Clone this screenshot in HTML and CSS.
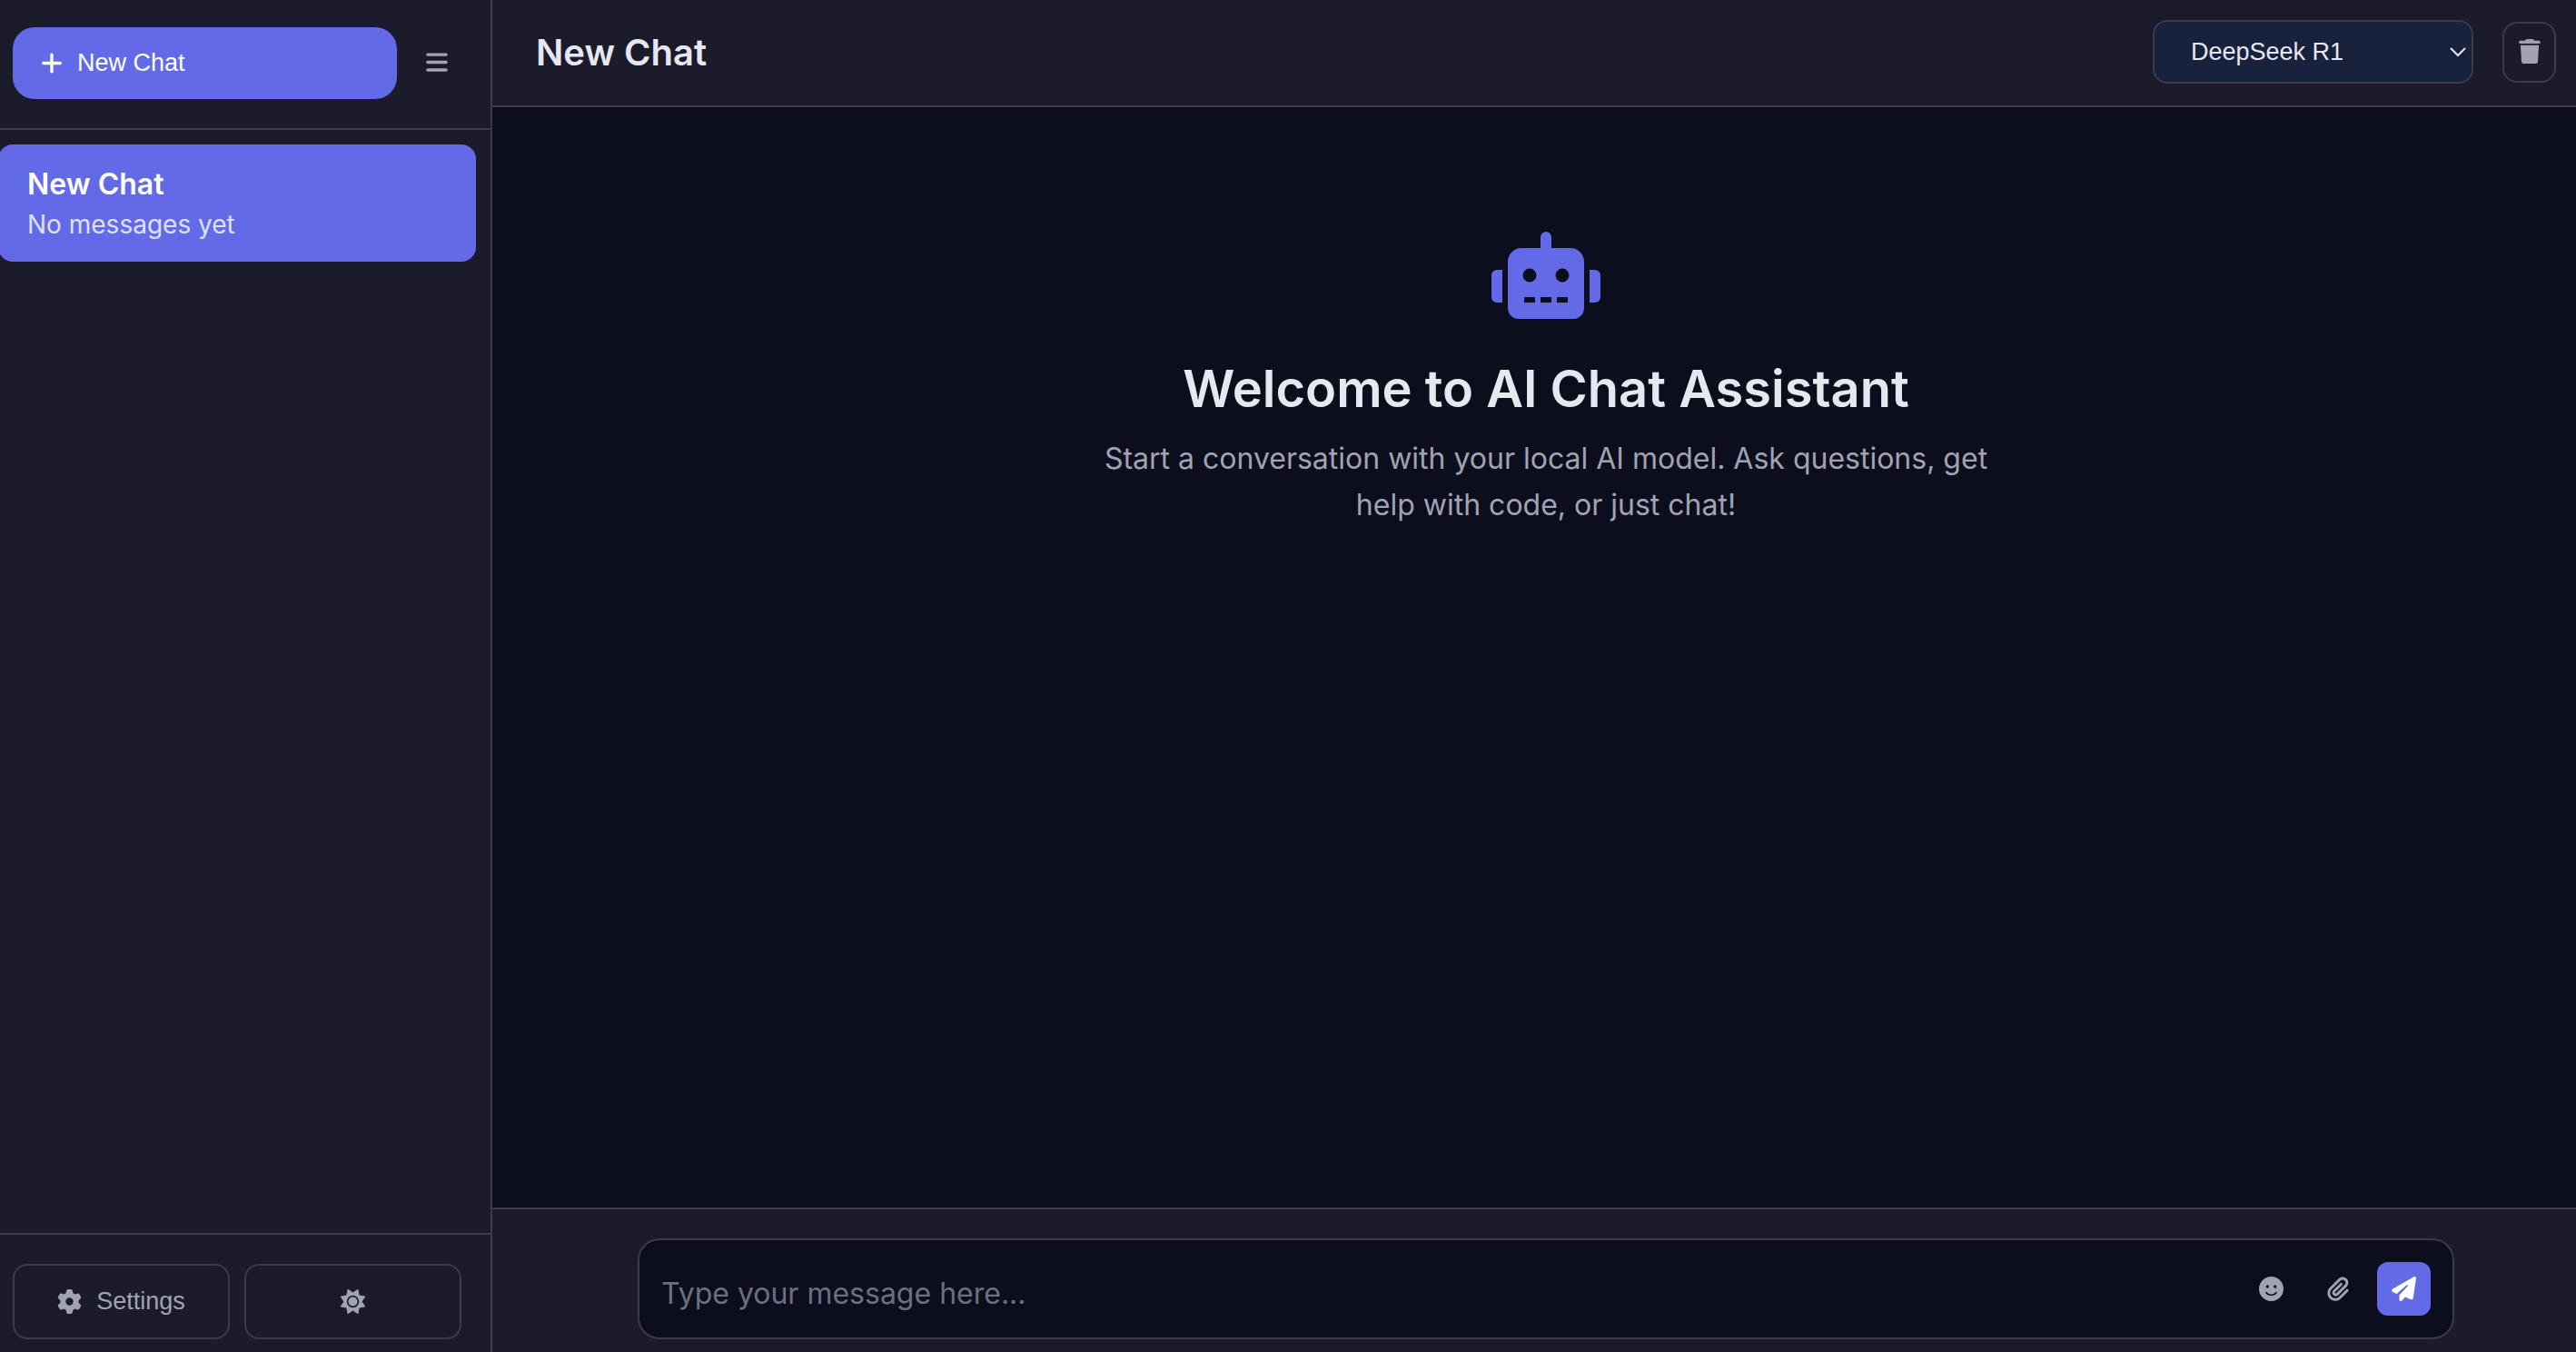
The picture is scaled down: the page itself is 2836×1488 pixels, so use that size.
FILE: index.html
```html
<!DOCTYPE html>
<html lang="en">
<head>
<meta charset="utf-8">
<title>AI Chat Assistant</title>
<link rel="stylesheet" href="styles.css">
</head>
<body>
<div class="app">
  <aside class="sidebar">
    <div class="sidebar-header">
      <button class="new-chat" type="button">
        <svg class="icon icon-narrow" viewBox="0 0 448 512" aria-hidden="true"><path d="M256 80c0-17.7-14.3-32-32-32s-32 14.3-32 32V224H48c-17.7 0-32 14.3-32 32s14.3 32 32 32H192V432c0 17.7 14.3 32 32 32s32-14.3 32-32V288H400c17.7 0 32-14.3 32-32s-14.3-32-32-32H256V80z"/></svg>
        <span>New Chat</span>
      </button>
      <button class="sidebar-toggle" type="button" aria-label="Toggle sidebar">
        <svg class="icon icon-narrow" viewBox="0 0 448 512" aria-hidden="true"><path d="M0 96C0 78.3 14.3 64 32 64H416c17.7 0 32 14.3 32 32s-14.3 32-32 32H32C14.3 128 0 113.7 0 96zM0 256c0-17.7 14.3-32 32-32H416c17.7 0 32 14.3 32 32s-14.3 32-32 32H32c-17.7 0-32-14.3-32-32zM448 416c0 17.7-14.3 32-32 32H32c-17.7 0-32-14.3-32-32s14.3-32 32-32H416c17.7 0 32 14.3 32 32z"/></svg>
      </button>
    </div>
    <nav class="chat-list" aria-label="Chats">
      <a class="chat-item" href="#chat">
        <span class="chat-title">New Chat</span>
        <span class="chat-preview">No messages yet</span>
      </a>
    </nav>
    <div class="sidebar-footer">
      <button class="footer-button" type="button">
        <svg class="icon" viewBox="0 0 512 512" aria-hidden="true"><path d="M495.9 166.6c3.2 8.7 .5 18.4-6.4 24.6l-43.3 39.4c1.1 8.3 1.7 16.8 1.7 25.4s-.6 17.1-1.7 25.4l43.3 39.4c6.9 6.2 9.6 15.9 6.4 24.6c-4.4 11.9-9.7 23.3-15.8 34.3l-4.7 8.1c-6.6 11-14 21.4-22.1 31.2c-5.9 7.2-15.7 9.6-24.5 6.8l-55.7-17.7c-13.4 10.3-28.2 18.9-44 25.4l-12.5 57.1c-2 9.1-9 16.3-18.2 17.8c-13.8 2.3-28 3.5-42.5 3.5s-28.7-1.2-42.5-3.5c-9.2-1.5-16.2-8.7-18.2-17.8l-12.5-57.1c-15.8-6.5-30.6-15.1-44-25.4L83.1 425.9c-8.8 2.8-18.6 .3-24.5-6.8c-8.1-9.8-15.5-20.2-22.1-31.2l-4.7-8.1c-6.1-11-11.4-22.4-15.8-34.3c-3.2-8.7-.5-18.4 6.4-24.6l43.3-39.4C64.6 273.1 64 264.6 64 256s.6-17.1 1.7-25.4L22.4 191.2c-6.9-6.2-9.6-15.9-6.4-24.6c4.4-11.9 9.7-23.3 15.8-34.3l4.7-8.1c6.6-11 14-21.4 22.1-31.2c5.9-7.2 15.7-9.6 24.5-6.8l55.7 17.7c13.4-10.3 28.2-18.9 44-25.4l12.5-57.1c2-9.1 9-16.3 18.2-17.8C227.3 1.2 241.5 0 256 0s28.7 1.2 42.5 3.5c9.2 1.5 16.2 8.7 18.2 17.8l12.5 57.1c15.8 6.5 30.6 15.1 44 25.4l55.7-17.7c8.8-2.8 18.6-.3 24.5 6.8c8.1 9.8 15.5 20.2 22.1 31.2l4.7 8.1c6.1 11 11.4 22.4 15.8 34.3zM256 336a80 80 0 1 0 0-160 80 80 0 1 0 0 160z"/></svg>
        <span>Settings</span>
      </button>
      <button class="footer-button" type="button" aria-label="Switch theme">
        <svg class="icon" viewBox="0 0 512 512" aria-hidden="true"><path d="M361.5 1.2c5 2.1 8.6 6.6 9.6 11.9L391 121l107.9 19.8c5.3 1 9.8 4.6 11.9 9.6s1.5 10.7-1.6 15.2L446.9 256l62.3 90.3c3.1 4.5 3.7 10.2 1.6 15.2s-6.6 8.6-11.9 9.6L391 391 371.1 498.9c-1 5.3-4.6 9.8-9.6 11.9s-10.7 1.5-15.2-1.6L256 446.9l-90.3 62.3c-4.5 3.1-10.2 3.7-15.2 1.6s-8.6-6.6-9.6-11.9L121 391 13.1 371.1c-5.3-1-9.8-4.6-11.9-9.6s-1.5-10.7 1.6-15.2L65.1 256 2.8 165.7c-3.1-4.5-3.7-10.2-1.6-15.2s6.6-8.6 11.9-9.6L121 121 140.9 13.1c1-5.3 4.6-9.8 9.6-11.9s10.7-1.5 15.2 1.6L256 65.1 346.3 2.8c4.5-3.1 10.2-3.7 15.2-1.6zM160 256a96 96 0 1 1 192 0 96 96 0 1 1 -192 0zm224 0a128 128 0 1 0 -256 0 128 128 0 1 0 256 0z"/></svg>
      </button>
    </div>
  </aside>

  <main class="main">
    <header class="main-header">
      <h1 class="main-title">New Chat</h1>
      <div class="model-picker">
        <select class="model-select" aria-label="Model">
          <option>DeepSeek R1</option>
        </select>
        <svg class="model-arrow" viewBox="0 0 18 12" aria-hidden="true"><path d="M1 2l8 8 8-8"/></svg>
      </div>
      <button class="clear-chat" type="button" aria-label="Delete chat">
        <svg class="icon icon-narrow" viewBox="0 0 448 512" aria-hidden="true"><path d="M135.2 17.7L128 32H32C14.3 32 0 46.3 0 64S14.3 96 32 96H416c17.7 0 32-14.3 32-32s-14.3-32-32-32H320l-7.2-14.3C307.4 6.8 296.3 0 284.2 0H163.8c-12.1 0-23.2 6.8-28.6 17.7zM416 128H32L53.2 467c1.6 25.3 22.6 45 47.9 45H346.9c25.3 0 46.3-19.7 47.9-45L416 128z"/></svg>
      </button>
    </header>

    <section class="messages">
      <svg class="robot" viewBox="0 0 640 512" aria-hidden="true"><path d="M32 224H64V416H32A32 32 0 0 1 0 384V256A32 32 0 0 1 32 224zm512-48V448a64 64 0 0 1-64 64H160a64 64 0 0 1-64-64V176a80 80 0 0 1 80-80H288V32a32 32 0 0 1 64 0V96H464A80 80 0 0 1 544 176zM264 256a40 40 0 1 0-40 40A40 40 0 0 0 264 256zm-8 128H192v32h64zm96 0H288v32h64zM456 256a40 40 0 1 0-40 40A40 40 0 0 0 456 256zm-8 128H384v32h64zM640 256V384a32 32 0 0 1-32 32H576V224h32A32 32 0 0 1 640 256z"/></svg>
      <h2 class="welcome-title">Welcome to AI Chat Assistant</h2>
      <p class="welcome-text">Start a conversation with your local AI model. Ask questions, get help with code, or just chat!</p>
    </section>

    <footer class="composer">
      <form class="composer-box">
        <textarea class="composer-input" rows="1" placeholder="Type your message here..." aria-label="Message"></textarea>
        <button class="tool-button" type="button" aria-label="Insert emoji">
          <svg class="icon" viewBox="0 0 512 512" aria-hidden="true"><path d="M256 512A256 256 0 1 0 256 0a256 256 0 1 0 0 512zM164.1 325.5C182 346.2 212.6 368 256 368s74-21.8 91.9-42.5c5.8-6.7 15.9-7.4 22.6-1.6s7.4 15.9 1.6 22.6C349.8 372.1 311.1 400 256 400s-93.8-27.9-116.1-53.5c-5.8-6.7-5.1-16.8 1.6-22.6s16.8-5.1 22.6 1.6zM144.4 208a32 32 0 1 1 64 0 32 32 0 1 1 -64 0zm192-32a32 32 0 1 1 0 64 32 32 0 1 1 0-64z"/></svg>
        </button>
        <button class="tool-button" type="button" aria-label="Attach file">
          <svg class="icon icon-narrow" viewBox="0 0 448 512" aria-hidden="true"><path d="M364.2 83.8c-24.4-24.4-64-24.4-88.4 0l-184 184c-42.1 42.1-42.1 110.3 0 152.4s110.3 42.1 152.4 0l152-152c10.9-10.9 28.7-10.9 39.6 0s10.9 28.7 0 39.6l-152 152c-64 64-167.6 64-231.6 0s-64-167.6 0-231.6l184-184c46.3-46.3 121.3-46.3 167.6 0s46.3 121.3 0 167.6l-176 176c-28.6 28.6-75 28.6-103.6 0s-28.6-75 0-103.6l144-144c10.9-10.9 28.7-10.9 39.6 0s10.9 28.7 0 39.6l-144 144c-6.7 6.7-6.7 17.7 0 24.4s17.7 6.7 24.4 0l176-176c24.4-24.4 24.4-64 0-88.4z"/></svg>
        </button>
        <button class="tool-button send-button" type="submit" aria-label="Send message">
          <svg class="icon" viewBox="0 0 512 512" aria-hidden="true"><path d="M498.1 5.6c10.1 7 15.4 19.1 13.5 31.2l-64 416c-1.5 9.7-7.4 18.2-16 23s-18.9 5.4-28 1.6L284 427.7l-68.5 74.1c-8.9 9.7-22.9 12.9-35.2 8.1S160 493.2 160 480V396.4c0-4 1.5-7.8 4.2-10.7L331.8 202.8c5.8-6.3 5.6-16-.4-22s-15.7-6.4-22-.7L106 360.8 17.7 316.6C7.1 311.3 .3 300.7 0 288.9s5.9-22.8 16.1-28.7l448-256c10.7-6.1 23.9-5.5 34 1.4z"/></svg>
        </button>
      </form>
    </footer>
  </main>
</div>
</body>
</html>
```

FILE: styles.css
```css
:root {
  --bg: #0c0d1d;
  --panel: #1b1b2b;
  --field: #19223c;
  --line: #3a3b4b;
  --accent: #626ae8;
  --text: #e6e8f0;
  --muted: #a1a3b3;
  --placeholder: #6c6f80;
  --ui-font: "Liberation Sans", Arial, sans-serif;
}

* {
  box-sizing: border-box;
}

body {
  margin: 0;
  background: var(--bg);
  color: var(--text);
  font-family: Inter, sans-serif;
  font-size: 32px;
}

button {
  display: flex;
  align-items: center;
  justify-content: center;
  margin: 0;
  padding: 0;
  border: 0;
  background: none;
  color: var(--muted);
  font-family: var(--ui-font);
  font-size: 27px;
  cursor: pointer;
}

.icon {
  flex: none;
  width: 27px;
  height: 27px;
  fill: currentColor;
}

.icon-narrow {
  width: 24px;
}

.app {
  display: flex;
  min-height: 100vh;
}

/* Sidebar */

.sidebar {
  display: flex;
  flex: none;
  flex-direction: column;
  width: 542px;
  border-right: 2px solid var(--line);
  background: var(--panel);
}

.sidebar-header {
  display: flex;
  gap: 16px;
  padding: 30px 32px 32px 14px;
  border-bottom: 2px solid var(--line);
}

.new-chat {
  flex: 1;
  justify-content: flex-start;
  gap: 16px;
  padding: 24px 31px;
  border-radius: 24px;
  background: var(--accent);
  color: #fff;
  font-weight: 500;
  line-height: 31px;
}

.sidebar-toggle {
  width: 55px;
  padding-bottom: 2px;
}

.chat-list {
  flex: 1;
  padding: 16px 16px 16px 0;
}

.chat-item {
  display: flex;
  flex-direction: column;
  margin-left: -2px;
  padding: 22px 32px 19px;
  border-radius: 16px;
  background: var(--accent);
  color: #fff;
  line-height: 44px;
  text-decoration: none;
}

.chat-title {
  font-weight: 600;
}

.chat-preview {
  font-size: 28px;
  opacity: 0.8;
}

.sidebar-footer {
  display: flex;
  gap: 16px;
  padding: 32px 32px 14px 14px;
  border-top: 2px solid var(--line);
}

.footer-button {
  flex: 1;
  gap: 16px;
  padding: 24px;
  border: 2px solid var(--line);
  border-radius: 16px;
  line-height: 31px;
}

/* Main column */

.main {
  display: flex;
  flex: 1;
  flex-direction: column;
  min-width: 0;
}

.main-header {
  display: flex;
  align-items: center;
  gap: 32px;
  padding: 22px 22px 24px 48px;
  border-bottom: 2px solid var(--line);
  background: var(--panel);
}

.main-title {
  flex: 1;
  margin: 0;
  padding-top: 2px;
  font-size: 40px;
  font-weight: 600;
  line-height: 64px;
}

.model-picker {
  position: relative;
}

.model-select {
  display: block;
  width: 353px;
  height: 70px;
  padding: 0 40px;
  border: 2px solid var(--line);
  border-radius: 16px;
  appearance: none;
  background: var(--field);
  color: var(--text);
  font-family: var(--ui-font);
  font-size: 27px;
}

.model-arrow {
  position: absolute;
  top: 29px;
  right: 8px;
  width: 18px;
  height: 12px;
  fill: none;
  stroke: var(--text);
  stroke-width: 2;
  pointer-events: none;
}

.clear-chat {
  width: 59px;
  height: 67px;
  padding-bottom: 2px;
  border: 2px solid var(--line);
  border-radius: 16px;
}

.messages {
  display: flex;
  flex: 1;
  flex-direction: column;
  align-items: center;
  padding: 137px 0 32px 26px;
  text-align: center;
}

.robot {
  width: 120px;
  height: 96px;
  fill: var(--accent);
}

.welcome-title {
  margin: 32px 0 6px;
  font-size: 56px;
  font-weight: 600;
  line-height: 90px;
}

.welcome-text {
  max-width: 1000px;
  margin: 0;
  color: var(--muted);
  line-height: 51px;
}

/* Message composer */

.composer {
  padding: 32px 32px 14px 58px;
  border-top: 2px solid var(--line);
  background: var(--panel);
}

.composer-box {
  display: flex;
  gap: 14px;
  max-width: 2000px;
  margin: 0 auto;
  padding: 24px;
  border: 2px solid var(--line);
  border-radius: 24px;
  background: var(--bg);
}

.composer-input {
  flex: 1;
  min-width: 0;
  height: 60px;
  margin-bottom: -1px;
  padding: 9px 0 0;
  border: 0;
  outline: 0;
  background: none;
  color: var(--text);
  font: inherit;
  line-height: 51px;
  resize: none;
}

.composer-input::placeholder {
  color: var(--placeholder);
}

.tool-button {
  width: 59px;
  height: 59px;
  border-radius: 12px;
}

.send-button {
  background: var(--accent);
  color: #fff;
}
```
